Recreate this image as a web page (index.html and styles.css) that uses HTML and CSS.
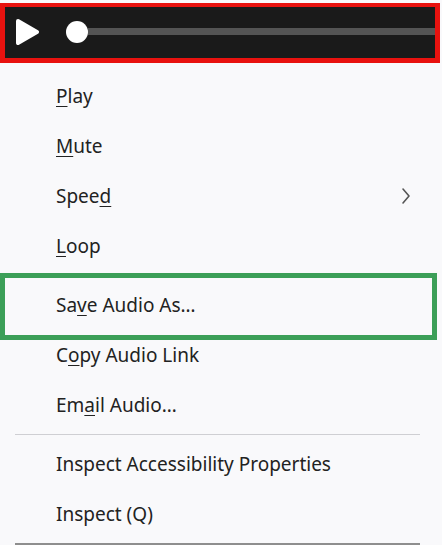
FILE: index.html
```html
<!DOCTYPE html>
<html lang="en">
<head>
  <meta charset="UTF-8">
  <meta name="viewport" content="width=device-width, initial-scale=1.0">
  <title>Audio context menu</title>
  <link rel="stylesheet" href="styles.css">
</head>
<body>
<div class="player">
  <svg class="play-icon" width="24" height="26" viewBox="0 0 24 26">
    <polygon points="2,2 21,13 2,24" fill="#fff" stroke="#fff" stroke-width="4" stroke-linejoin="round"/>
  </svg>
  <div class="seek">
    <div class="knob"></div>
    <div class="track"></div>
  </div>
</div>

<ul class="menu">
  <li class="item"><span><u>P</u>lay</span></li>
  <li class="item"><span><u>M</u>ute</span></li>
  <li class="item">
    <span>Spee<u>d</u></span>
    <svg class="chevron" width="10" height="18" viewBox="0 0 10 18">
      <polyline points="2,2 8,9 2,16" fill="none" stroke="#555" stroke-width="1.6" stroke-linecap="round" stroke-linejoin="round"/>
    </svg>
  </li>
  <li class="item"><span><u>L</u>oop</span></li>
  <li class="sep"></li>
  <li class="item highlight"><span>Sa<u>v</u>e Audio As…</span></li>
  <li class="item"><span>C<u>o</u>py Audio Link</span></li>
  <li class="item"><span>Em<u>a</u>il Audio…</span></li>
  <li class="sep"></li>
  <li class="item"><span>Inspect Accessibility Properties</span></li>
  <li class="item"><span>Inspect (Q)</span></li>
  <li class="sep dark"></li>
</ul>
</body>
</html>
```

FILE: styles.css
```css
body {
  margin: 0;
  background-color: #f9f9fb;
  font-family: "Noto Sans", "Open Sans", sans-serif;
  color: #222;
  overflow: hidden;
}

.player {
  display: flex;
  align-items: center;
  height: 49px;
  width: 430px;
  margin-top: 3px;
  padding-bottom: 2px;
  border: 5px solid #e8120f;
  border-top-width: 4px;
  background-color: #1a1a1a;
}

.play-icon {
  margin-left: 11px;
}

.seek {
  flex: 1;
  display: flex;
  align-items: center;
}

.knob {
  width: 22px;
  height: 22px;
  border-radius: 50%;
  background-color: #fff;
  margin-left: 26px;
}

.track {
  flex: 1;
  height: 7px;
  background-color: #545454;
}

.menu {
  list-style: none;
  margin: 8px 0 0 0;
  padding: 0;
}

.item {
  position: relative;
  display: flex;
  align-items: center;
  justify-content: space-between;
  height: 50px;
  padding: 0 31px 0 56px;
  font-size: 19px;
}

.item u {
  text-underline-offset: 3px;
  text-decoration-thickness: 1px;
}

.sep {
  height: 1px;
  margin: 4px 22px 4px 15px;
  background-color: #cfcfd3;
}

.sep.dark {
  height: 2px;
  background-color: #8e8e8e;
}

.highlight::after {
  content: "";
  position: absolute;
  top: -7px;
  left: 0;
  right: 5px;
  bottom: -10px;
  border: 5px solid #3c9f58;
}
```
